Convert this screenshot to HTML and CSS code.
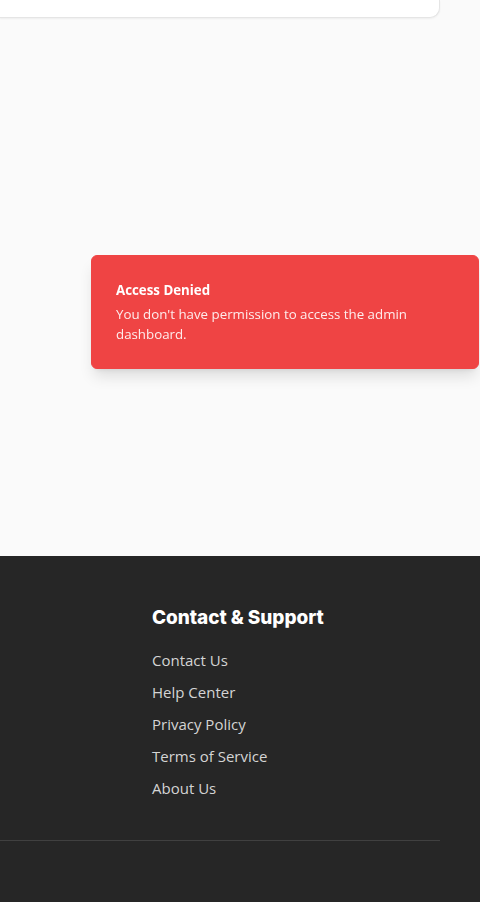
FILE: index.html
```html
<!DOCTYPE html>
<html lang="en">
<head>
<meta charset="utf-8">
<title>Access Denied</title>
<link rel="stylesheet" href="styles.css">
</head>
<body>
<main class="main">
  <div class="card"></div>
</main>
<footer class="footer">
  <div class="footer-inner">
    <div class="footer-col">
      <h3 class="footer-title">Contact &amp; Support</h3>
      <ul class="footer-links">
        <li><a href="#">Contact Us</a></li>
        <li><a href="#">Help Center</a></li>
        <li><a href="#">Privacy Policy</a></li>
        <li><a href="#">Terms of Service</a></li>
        <li><a href="#">About Us</a></li>
      </ul>
    </div>
    <div class="footer-bottom"></div>
  </div>
</footer>
<div class="toast" role="alert">
  <div class="toast-title">Access Denied</div>
  <div class="toast-desc">You don't have permission to access the admin dashboard.</div>
</div>
</body>
</html>
```
FILE: styles.css
```css
* { box-sizing: border-box; }
html, body { margin: 0; padding: 0; }
body {
  font-family: "Open Sans", "Noto Sans", "Liberation Sans", sans-serif;
  background: #fafafa;
  overflow: hidden;
  height: 902px;
}
.main {
  height: 556px;
  background: #fafafa;
}
.card {
  width: 440px;
  height: 18px;
  background: #ffffff;
  border: 1px solid #e5e5e5;
  border-top: none;
  border-left: none;
  border-radius: 0 0 10px 0;
  box-shadow: 0 1px 2px rgba(0,0,0,0.05);
}
.footer {
  background: #262626;
  height: 346px;
}
.footer-inner {
  width: 440px;
  padding-top: 48px;
}
.footer-col {
  padding-left: 152px;
}
.footer-title {
  margin: 0;
  font-family: "Inter", "Noto Sans", sans-serif;
  font-weight: 800;
  font-size: 19px;
  line-height: 28px;
  color: #ffffff;
  letter-spacing: -0.05px;
}
.footer-links {
  list-style: none;
  margin: 16px 0 0;
  padding: 0;
  display: flex;
  flex-direction: column;
  gap: 8px;
}
.footer-links a {
  display: block;
  font-size: 15px;
  line-height: 24px;
  color: #d4d4d4;
  text-decoration: none;
}
.footer-bottom {
  margin-top: 40px;
  border-top: 1px solid #404040;
}
.toast {
  position: fixed;
  top: 255px;
  right: 1px;
  width: 388px;
  padding: 24px;
  background: #ef4444;
  border: 1px solid #ef4444;
  border-radius: 6px;
  box-shadow: 0 10px 15px -3px rgba(0,0,0,0.12), 0 4px 6px -4px rgba(0,0,0,0.1);
  color: #ffffff;
  font-size: 13.3px;
}
.toast-title {
  font-weight: 700;
  line-height: 20px;
}
.toast-desc {
  margin-top: 4px;
  line-height: 20px;
  color: rgba(255,255,255,0.9);
}
```
